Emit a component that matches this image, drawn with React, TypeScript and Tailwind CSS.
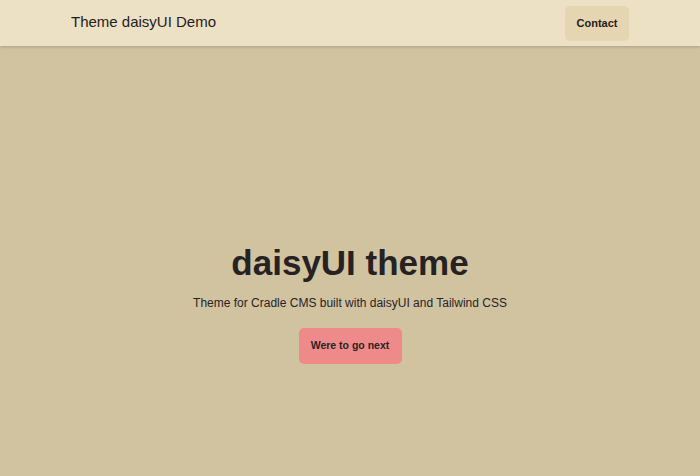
import React from 'react';

const App: React.FC = () => {
  return (
    <div className="min-h-screen w-full bg-[#d1c2a0] text-[#282425] font-['Liberation_Sans',Arial,sans-serif] flex flex-col">
      {/* Navbar */}
      <header className="h-[46px] bg-[#ece1c5] shadow-[0_1px_3px_rgba(0,0,0,0.18)] flex items-center justify-between px-[71px] relative z-10">
        <a className="text-[15px] leading-none pb-[3px] text-[#1f1c1c]">Theme daisyUI Demo</a>
        <button className="h-[35px] w-[64px] rounded-[5px] bg-[#e5d5b1] text-[11px] font-bold text-[#1f1c1c]">
          Contact
        </button>
      </header>

      {/* Hero */}
      <main className="flex-1 flex flex-col items-center pt-[197px] text-center">
        <h1 className="text-[35px] leading-[40px] font-bold text-[#262223]">daisyUI theme</h1>
        <p className="mt-[10px] text-[12px] leading-[20px] text-[#282425]">
          Theme for Cradle CMS built with daisyUI and Tailwind CSS
        </p>
        <button className="mt-[15px] h-[36px] w-[103px] rounded-[5px] bg-[#ef8a8a] text-[10.5px] font-bold text-[#282425]">
          Were to go next
        </button>
      </main>
    </div>
  );
};

export default App;
